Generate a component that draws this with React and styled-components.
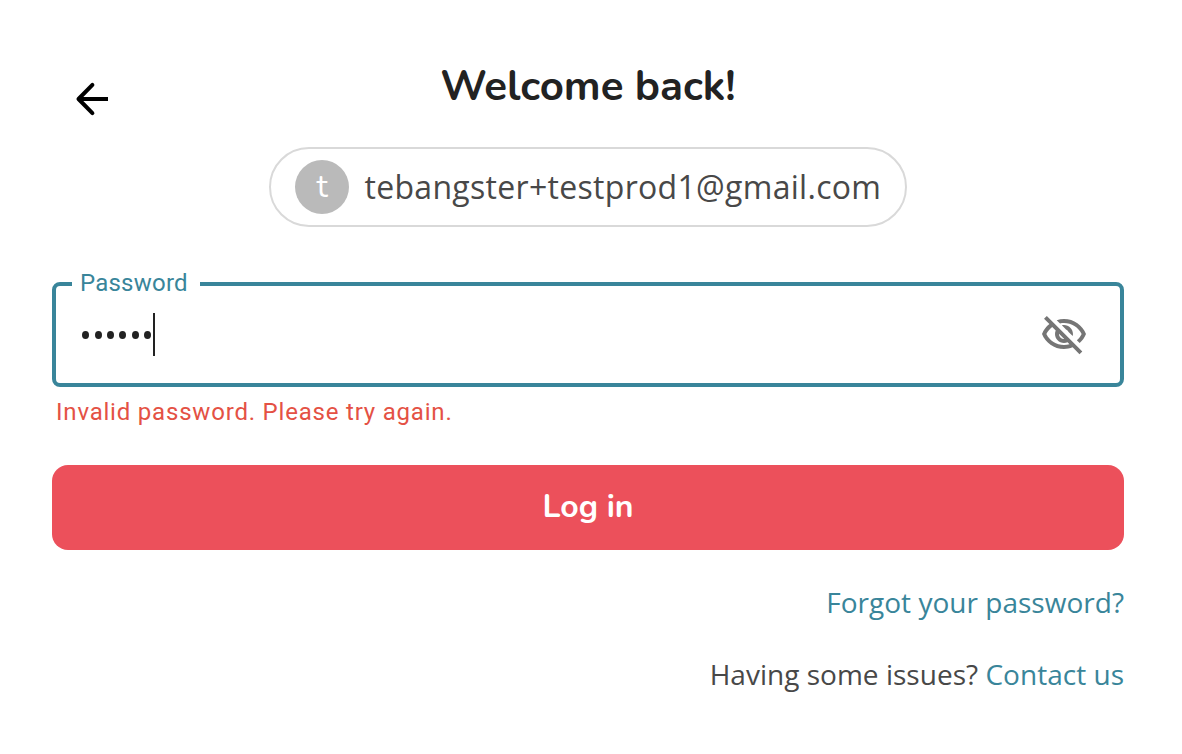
import React, { useState } from "react";
import styled, { createGlobalStyle } from "styled-components";

const GlobalStyle = createGlobalStyle`
  body {
    margin: 0;
    background: #fff;
  }

  *, *::before, *::after {
    box-sizing: border-box;
  }
`;

const Page = styled.main`
  display: flex;
  flex-direction: column;
  width: 1182px;
  height: 754px;
  padding: 57px 58px 0 52px;
  overflow: hidden;
  font-family: "Open Sans", sans-serif;
  color: #484848;
`;

const Header = styled.header`
  display: grid;
  grid-template-columns: 80px 1fr 80px;
  height: 90px;
`;

const IconButton = styled.button`
  display: flex;
  padding: 0;
  border: 0;
  background: none;
  color: ${p => p.color};
  cursor: pointer;
`;

const BackButton = styled(IconButton)`
  height: 34px;
  margin: 25px 0 0 23px;
`;

const Title = styled.h1`
  margin: 0;
  font-family: Nunito, Lato, sans-serif;
  font-size: 42px;
  font-weight: 700;
  line-height: 60px;
  text-align: center;
  white-space: nowrap;
  color: #222;
`;

const AccountChip = styled.div`
  display: flex;
  align-items: center;
  align-self: center;
  width: 638px;
  height: 80px;
  padding: 0 24px;
  border: 2px solid #d9d9d9;
  border-radius: 40px;
`;

const Avatar = styled.span`
  flex: none;
  width: 54px;
  height: 54px;
  margin-right: 15.5px;
  border-radius: 50%;
  background: #bababa;
  color: #fff;
  font-family: Nunito, "Open Sans", sans-serif;
  font-size: 32px;
  line-height: 53px;
  text-align: center;
`;

const Email = styled.span`
  padding-bottom: 2px;
  font-size: 32px;
  letter-spacing: 0.3px;
  white-space: nowrap;
`;

const Field = styled.fieldset`
  display: flex;
  height: 115px;
  margin: 45px 0 0;
  padding: 0 32px 0 16px;
  border: 4px solid #39859a;
  border-radius: 8px;
`;

const Label = styled.legend`
  width: 128px;
  height: 24px;
  padding: 0 8px;
  font-family: Roboto, sans-serif;
  font-size: 24px;
  line-height: 22px;
  letter-spacing: 0.22px;
  white-space: nowrap;
  color: #39859a;
`;

const FieldRow = styled.div`
  display: flex;
  flex: 1;
  align-items: flex-start;
  padding: 15px 0 0 8px;
`;

const Dots = styled.span`
  display: flex;
  gap: 5.4px;
  margin: 20px 0 0 2.3px;
`;

const Dot = styled.i`
  width: 7px;
  height: 8px;
  border-radius: 50%;
  background: #222;
`;

const Caret = styled.span`
  width: 2px;
  height: 43px;
  margin: 2px auto 0 1.7px;
  background: #222;
`;

const ErrorText = styled.p`
  margin: 13px 0 0 4px;
  font-family: Roboto, sans-serif;
  font-size: 24px;
  line-height: 24px;
  letter-spacing: 0.8px;
  color: #e45144;
`;

const LoginButton = styled.button`
  height: 85px;
  margin: 41px 0 0;
  padding: 0 0 2px;
  border: 0;
  border-radius: 16px;
  background: #ec505b;
  color: #fff;
  font-family: Nunito, Lato, sans-serif;
  font-size: 32px;
  font-weight: 700;
  cursor: pointer;
`;

const HelpLine = styled.p`
  margin: 32px 0 0;
  font-size: 28px;
  line-height: 40px;
  letter-spacing: 0.02px;
  text-align: right;
`;

const Link = styled.a`
  color: #39859a;
  text-decoration: none;
`;

function ArrowLeft() {
  return (
    <svg width="34" height="34" viewBox="0 0 34 34" fill="none">
      <path
        d="M17.4 2.9 3.5 17l13.9 14.1"
        stroke="currentColor"
        strokeWidth="4"
        strokeLinecap="round"
        strokeLinejoin="round"
      />
      <path d="M3.5 17H33" stroke="currentColor" strokeWidth="4" />
    </svg>
  );
}

function VisibilityOff() {
  return (
    <svg width="48" height="48" viewBox="0 0 24 24" fill="currentColor">
      <path d="M12 6c3.79 0 7.17 2.13 8.82 5.5-.59 1.22-1.42 2.27-2.41 3.12l1.41 1.41c1.39-1.23 2.49-2.77 3.18-4.53C21.27 7.11 17 4 12 4c-1.27 0-2.49.2-3.64.57l1.65 1.65C10.66 6.09 11.32 6 12 6zm-1.07 1.14L13 9.21c.57.25 1.03.71 1.28 1.28l2.07 2.07c.08-.34.14-.7.14-1.07C16.5 9.01 14.48 7 12 7c-.37 0-.72.05-1.07.14zM2.01 3.87l2.68 2.68C3.06 7.83 1.77 9.53 1 11.5 2.73 15.89 7 19 12 19c1.52 0 2.98-.29 4.32-.82l3.42 3.42 1.41-1.41L3.42 2.45 2.01 3.87zm7.5 7.5l2.61 2.61c-.04.01-.08.02-.12.02-1.38 0-2.5-1.12-2.5-2.5 0-.05.01-.08.01-.13zm-3.4-3.4l1.75 1.75c-.23.55-.36 1.15-.36 1.78 0 2.48 2.02 4.5 4.5 4.5.63 0 1.23-.13 1.77-.36l.98.98c-.88.24-1.8.38-2.75.38-3.79 0-7.17-2.13-8.82-5.5.7-1.43 1.72-2.61 2.93-3.53z" />
    </svg>
  );
}

function PasswordField({ length }) {
  return (
    <Field>
      <Label>Password</Label>
      <FieldRow>
        <Dots>
          {Array.from({ length }, (_, index) => (
            <Dot key={index} />
          ))}
        </Dots>
        <Caret />
        <IconButton type="button" color="#757575" aria-label="Show password">
          <VisibilityOff />
        </IconButton>
      </FieldRow>
    </Field>
  );
}

export default function App() {
  const [email] = useState("tebangster+testprod1@gmail.com");

  return (
    <>
      <GlobalStyle />
      <Page>
        <Header>
          <BackButton type="button" color="#000" aria-label="Back">
            <ArrowLeft />
          </BackButton>
          <Title>Welcome back!</Title>
        </Header>
        <AccountChip>
          <Avatar>{email[0]}</Avatar>
          <Email>{email}</Email>
        </AccountChip>
        <PasswordField length={6} />
        <ErrorText>Invalid password. Please try again.</ErrorText>
        <LoginButton type="button">Log in</LoginButton>
        <HelpLine>
          <Link href="#">Forgot your password?</Link>
        </HelpLine>
        <HelpLine>
          Having some issues? <Link href="#">Contact us</Link>
        </HelpLine>
      </Page>
    </>
  );
}
